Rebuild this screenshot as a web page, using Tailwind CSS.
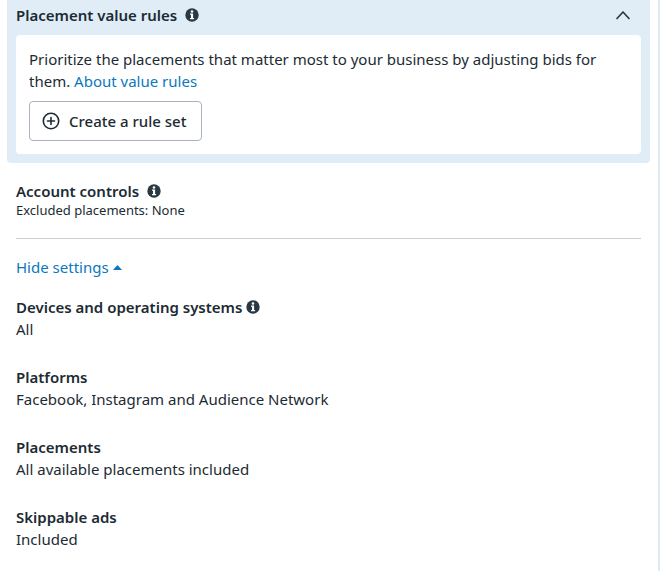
<!DOCTYPE html>
<html lang="en">
<head>
<meta charset="utf-8">
<meta name="viewport" content="width=device-width, initial-scale=1">
<title>Placement settings</title>
<script src="https://cdn.jsdelivr.net/npm/@tailwindcss/browser@4"></script>
</head>
<body class="bg-white font-['Noto_Sans',sans-serif] text-[15px] leading-[22px] text-[#1c2b33]">
<svg class="hidden" aria-hidden="true">
  <symbol id="info" viewBox="0 0 14 14">
    <circle cx="7" cy="7" r="6.700" fill="#283943"/>
    <circle cx="7" cy="3.500" r="1.300" fill="#fff"/>
    <path d="M5 5.500h3.100v4.400h1v1.300H5V9.900h1V6.800H5z" fill="#fff"/>
  </symbol>
</svg>
<main class="min-h-screen border-r-2 border-[#dfe9f6] pr-2 pl-[7px]">
  <section class="rounded-b bg-[#e0edf7] px-[9px] pb-[9px]">
    <header class="flex h-[35px] items-center gap-2 pr-[11px] pb-[5px]">
      <h2 class="font-semibold">Placement value rules</h2>
      <button type="button" aria-label="About placement value rules"><svg class="size-3.5"><use href="#info"/></svg></button>
      <button type="button" aria-label="Collapse" class="ml-auto"><svg class="size-3.5" viewBox="0 0 14 14" fill="none" stroke="#283943" stroke-width="1.7" stroke-linecap="round" stroke-linejoin="round"><path d="M1 10.500 7 4l6 6.500"/></svg></button>
    </header>
    <div class="rounded bg-white p-[13px]">
      <p>Prioritize the placements that matter most to your business by adjusting bids for them. <a href="#" class="text-[#0a78be]">About value rules</a></p>
      <button type="button" class="mt-[9px] flex h-10 items-center gap-[9px] rounded border border-[#a9b3c1] pr-[15px] pl-3 font-medium">
        <svg class="size-[18px]" viewBox="0 0 18 18" fill="none" stroke="#1c2b33" stroke-width="1.6" stroke-linecap="round"><circle cx="9" cy="9" r="7.700"/><path d="M9 5.500v7M5.500 9h7"/></svg>
        Create a rule set
      </button>
    </div>
  </section>
  <div class="px-[9px]">
    <section class="border-b border-[#cbced2] pt-[17px] pb-[19px]">
      <div class="flex items-center gap-2">
        <h2 class="font-semibold">Account controls</h2>
        <button type="button" aria-label="About account controls"><svg class="size-3.5"><use href="#info"/></svg></button>
      </div>
      <p class="text-[13px] leading-[17px]">Excluded placements: None</p>
    </section>
    <button type="button" class="mt-[17px] flex items-center gap-1 text-[#0a78be]">Hide settings
      <svg class="h-[5px] w-[9px]" viewBox="0 0 9 5"><path d="M0 5 4.500 0 9 5z" fill="#0a78be"/></svg>
    </button>
    <dl class="mt-[18px] flex flex-col gap-[26px]">
      <div>
        <dt class="flex items-center gap-1 font-semibold">Devices and operating systems
          <button type="button" aria-label="About devices and operating systems"><svg class="size-3.5"><use href="#info"/></svg></button>
        </dt>
        <dd>All</dd>
      </div>
      <div><dt class="font-semibold">Platforms</dt><dd>Facebook, Instagram and Audience Network</dd></div>
      <div><dt class="font-semibold">Placements</dt><dd>All available placements included</dd></div>
      <div><dt class="font-semibold">Skippable ads</dt><dd>Included</dd></div>
    </dl>
  </div>
</main>
</body>
</html>
